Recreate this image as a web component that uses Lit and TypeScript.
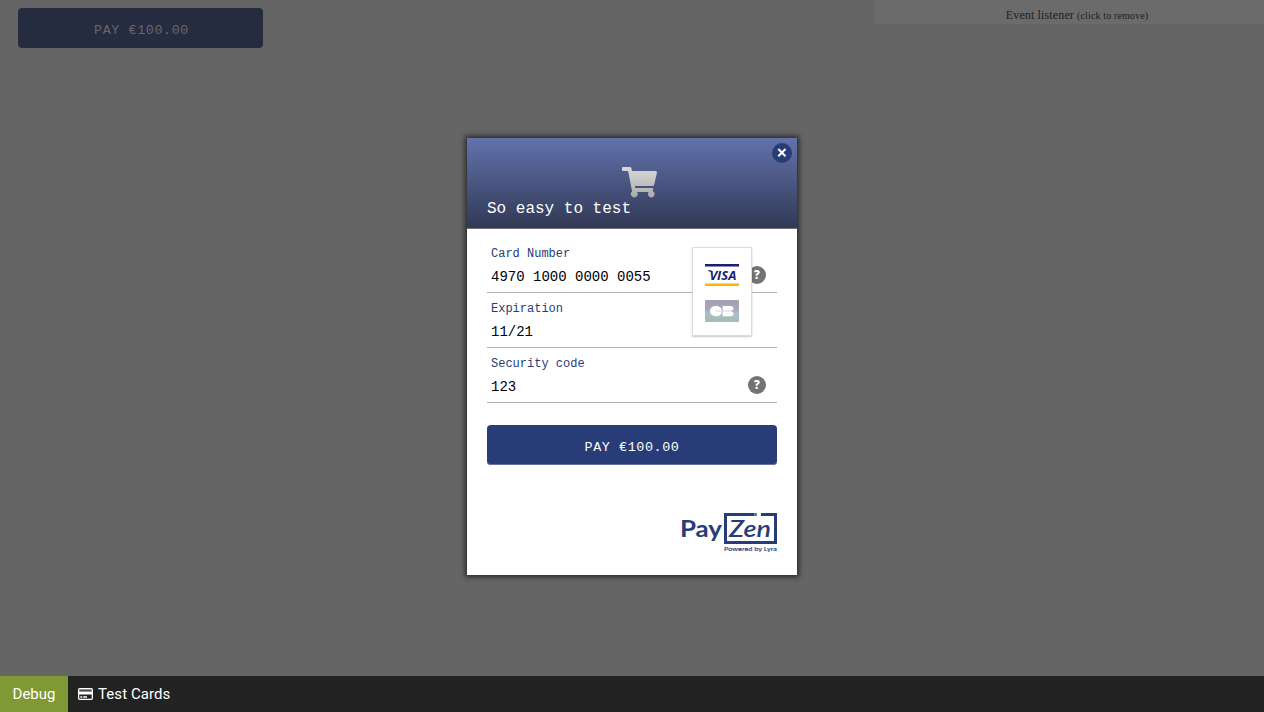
import { LitElement, html, css } from "lit";
import { customElement, property } from "lit/decorators.js";

@customElement("help-icon")
class HelpIcon extends LitElement {
  static styles = css`
    :host { display: block; width: 18px; height: 18px; }
    svg { display: block; }
  `;
  render() {
    return html`<svg width="18" height="18" viewBox="0 0 18 18">
      <circle cx="9" cy="9" r="9" fill="#737373"></circle>
      <text x="9" y="13" text-anchor="middle" font-family="Open Sans, sans-serif" font-size="11.5" font-weight="800" fill="#fff">?</text>
    </svg>`;
  }
}

@customElement("form-field")
class FormField extends LitElement {
  @property() label = "";
  @property() value = "";
  @property({ type: Boolean }) help = false;
  static styles = css`
    :host { display: flex; box-sizing: border-box; height: 55px; border-bottom: 1px solid #b3b3b3; justify-content: space-between; padding: 8px 11px 0 4px; font-family: "Liberation Mono", monospace; }
    .label { font-size: 12px; line-height: 17px; color: #283c78; }
    .value { font-size: 14px; line-height: 18px; color: #000; margin-top: 5px; white-space: pre; }
    help-icon { margin-top: 20px; }
  `;
  render() {
    return html`<div><div class="label">${this.label}</div><div class="value">${this.value}</div></div>
      ${this.help ? html`<help-icon></help-icon>` : ""}`;
  }
}

@customElement("app-root")
class AppRoot extends LitElement {
  static styles = css`
    :host { display: flex; flex-direction: column; width: 1264px; height: 712px; position: relative; overflow: hidden; background: #656565; }
    .page { flex: 1; display: flex; justify-content: space-between; align-items: flex-start; }
    .pay { font: 13.4px "Liberation Mono", monospace; letter-spacing: 0.6px; height: 40px; display: flex; align-items: center; justify-content: center; border-radius: 4px; box-sizing: border-box; padding: 4px 0 0; }
    .back { width: 245px; margin: 8px 0 0 18px; padding: 4px 0 0 2px; background: #262c3f; color: #65676b; }
    .events { width: 390px; height: 24px; background: #6b6b6b; color: #1f1f1f; font: 12px/30px "Liberation Serif", serif; letter-spacing: 0.13px; text-align: center; padding-left: 16px; box-sizing: border-box; }
    .events small { font-size: 10px; }
    .bar { height: 36px; background: #222; display: flex; font: 15px/36px Roboto, sans-serif; color: #fff; }
    .debug { width: 68px; background: #7f9934; text-align: center; }
    .cards { display: flex; align-items: center; gap: 5px; padding-left: 10px; letter-spacing: 0.08px; }
    .modal { position: absolute; left: 467px; top: 138px; width: 330px; height: 437px; background: #fff; box-shadow: 0 0 5px 2px rgba(0, 0, 0, 0.6); display: flex; flex-direction: column; }
    .head { height: 91px; box-sizing: border-box; border-bottom: 1px solid #77737c; background: linear-gradient(#6272ac, #313955); position: relative; display: flex; align-items: flex-end; padding: 0 20px 9px; }
    .title { font: 16px/20px "Liberation Mono", monospace; color: #fff; }
    .cart { position: absolute; left: 155px; top: 28px; }
    .close { position: absolute; right: 5px; top: 5px; }
    .form { padding: 9px 20px 0; }
    .form .pay { margin-top: 22px; background: #283c78; color: #fff; box-shadow: inset 0 -1px #6474a0; }
    .brands { position: absolute; left: 225px; top: 109px; width: 60px; height: 89px; box-sizing: border-box; background: #fff; border: 1px solid #dcdcdc; box-shadow: 0 1px 2px rgba(0, 0, 0, 0.22); display: flex; flex-direction: column; align-items: center; gap: 14px; padding-top: 16px; border-radius: 1px; }
    .logo { display: flex; justify-content: flex-end; padding: 48px 20px 0 0; }
    svg { display: block; }
  `;

  cart() {
    return html`<svg class="cart" width="36" height="33" viewBox="0 0 36 33">
      <defs><linearGradient id="cg" x2="0" y2="1"><stop stop-color="#dadada"></stop><stop offset="1" stop-color="#ababab"></stop></linearGradient></defs>
      <path fill="url(#cg)" d="M1.2 1H8Q9.1 1 9.4 2.2L9.9 5H33.6Q35.3 5 35 6.5L32.2 18.8Q31.9 20 30.7 20H12.9L13.3 22H30.2Q31.5 22 31.2 23.4L30.8 25.2A3.3 3.3 0 1 1 26.8 26H14.9A3.3 3.3 0 1 1 10.1 25.6L6.1 5H1.2Q0 5 0 3.8V2.2Q0 1 1.2 1Z"></path>
    </svg>`;
  }

  render() {
    return html`
      <div class="page">
        <div class="pay back">PAY €100.00</div>
        <div class="events">Event listener <small>(click to remove)</small></div>
      </div>
      <div class="bar">
        <div class="debug">Debug</div>
        <div class="cards">
          <svg width="15" height="12" viewBox="0 0 15 12">
            <rect x=".65" y=".65" width="13.7" height="10.7" rx="1" fill="none" stroke="#fff" stroke-width="1.3"></rect>
            <path d="M1 3.6h13v2.9H1zM2.3 8.2h2v1.5h-2zM5.2 8.2h3.8v1.5H5.2z" fill="#fff"></path>
            <path d="M1.2 1.3h12.6v1H1.2z" fill="#aaa"></path>
          </svg>
          <span>Test Cards</span>
        </div>
      </div>
      <div class="modal">
        <div class="head">
          ${this.cart()}
          <svg class="close" width="20" height="20" viewBox="0 0 20 20">
            <circle cx="10" cy="10" r="10" fill="#283c78"></circle>
            <path d="M6.3 6l7.2 7.2M13.5 6l-7.2 7.2" stroke="#fff" stroke-width="2"></path>
          </svg>
          <div class="title">So easy to test</div>
        </div>
        <div class="form">
          <form-field label="Card Number" value="4970 1000 0000 0055" help></form-field>
          <form-field label="Expiration" value="11/21"></form-field>
          <form-field label="Security code" value="123" help></form-field>
          <div class="pay">PAY €100.00</div>
        </div>
        <div class="brands">
          <svg width="34" height="22" viewBox="0 0 34 22">
            <path d="M0 0h34v2.6H0z" fill="#1a1f71"></path><path d="M0 19.5h34V22H0z" fill="#f7b600"></path>
            <path d="M3 6.3H6.5V7.8H4.6Q4 7 3 6.8z" fill="#1a1f71"></path>
            <text x="4.4" y="15.8" font-family="Open Sans, sans-serif" font-size="13.2" font-style="italic" font-weight="700" fill="#1a1f71" textLength="27" lengthAdjust="spacingAndGlyphs">VISA</text>
          </svg>
          <svg width="34" height="22" viewBox="0 0 34 22">
            <defs><linearGradient id="cb" x2="0" y2="1"><stop stop-color="#a79fb5"></stop><stop offset=".4" stop-color="#a5a6bd"></stop><stop offset=".62" stop-color="#a9bfd6"></stop><stop offset=".85" stop-color="#a7bfb2"></stop><stop offset="1" stop-color="#a3bfa7"></stop></linearGradient></defs>
            <rect width="34" height="22" rx="1" fill="url(#cb)"></rect>
            <path fill="#fff" d="M17 10.8H11V11.2H17C16.7 14.4 14.2 16.2 11 16.2C7.6 16.2 5 14 5 11C5 8 7.6 6 11 6C14.2 6 16.7 7.6 17 10.8ZM17.6 6H26Q28.6 6.2 28.6 8.3Q28.6 10.5 26 10.7H17.6ZM17.6 11.3H26Q28.6 11.5 28.6 13.8Q28.6 16 26 16.2H17.6Z"></path>
          </svg>
        </div>
        <div class="logo">
          <svg width="96" height="42" viewBox="0 0 96 42">
            <path d="M73 1.5H44.5V29.5H94.5V1.5H80" fill="none" stroke="#283c78" stroke-width="3"></path>
            <path d="M73 0h3v3h-3z" fill="#3f80c8"></path>
            <text x="-1" y="24" font-family="Lato, sans-serif" font-size="22.5" font-weight="700" fill="#283c78" textLength="42" lengthAdjust="spacingAndGlyphs">Pay</text>
            <text x="48" y="24" font-family="Lato, sans-serif" font-size="22.5" font-style="italic" font-weight="600" fill="#283c78" textLength="42" lengthAdjust="spacingAndGlyphs">Zen</text>
            <text x="43" y="38" font-family="Lato, sans-serif" font-size="6.4" fill="#283c78" stroke="#283c78" stroke-width=".15" textLength="53" lengthAdjust="spacingAndGlyphs">Powered by Lyra</text>
          </svg>
        </div>
      </div>
    `;
  }
}
